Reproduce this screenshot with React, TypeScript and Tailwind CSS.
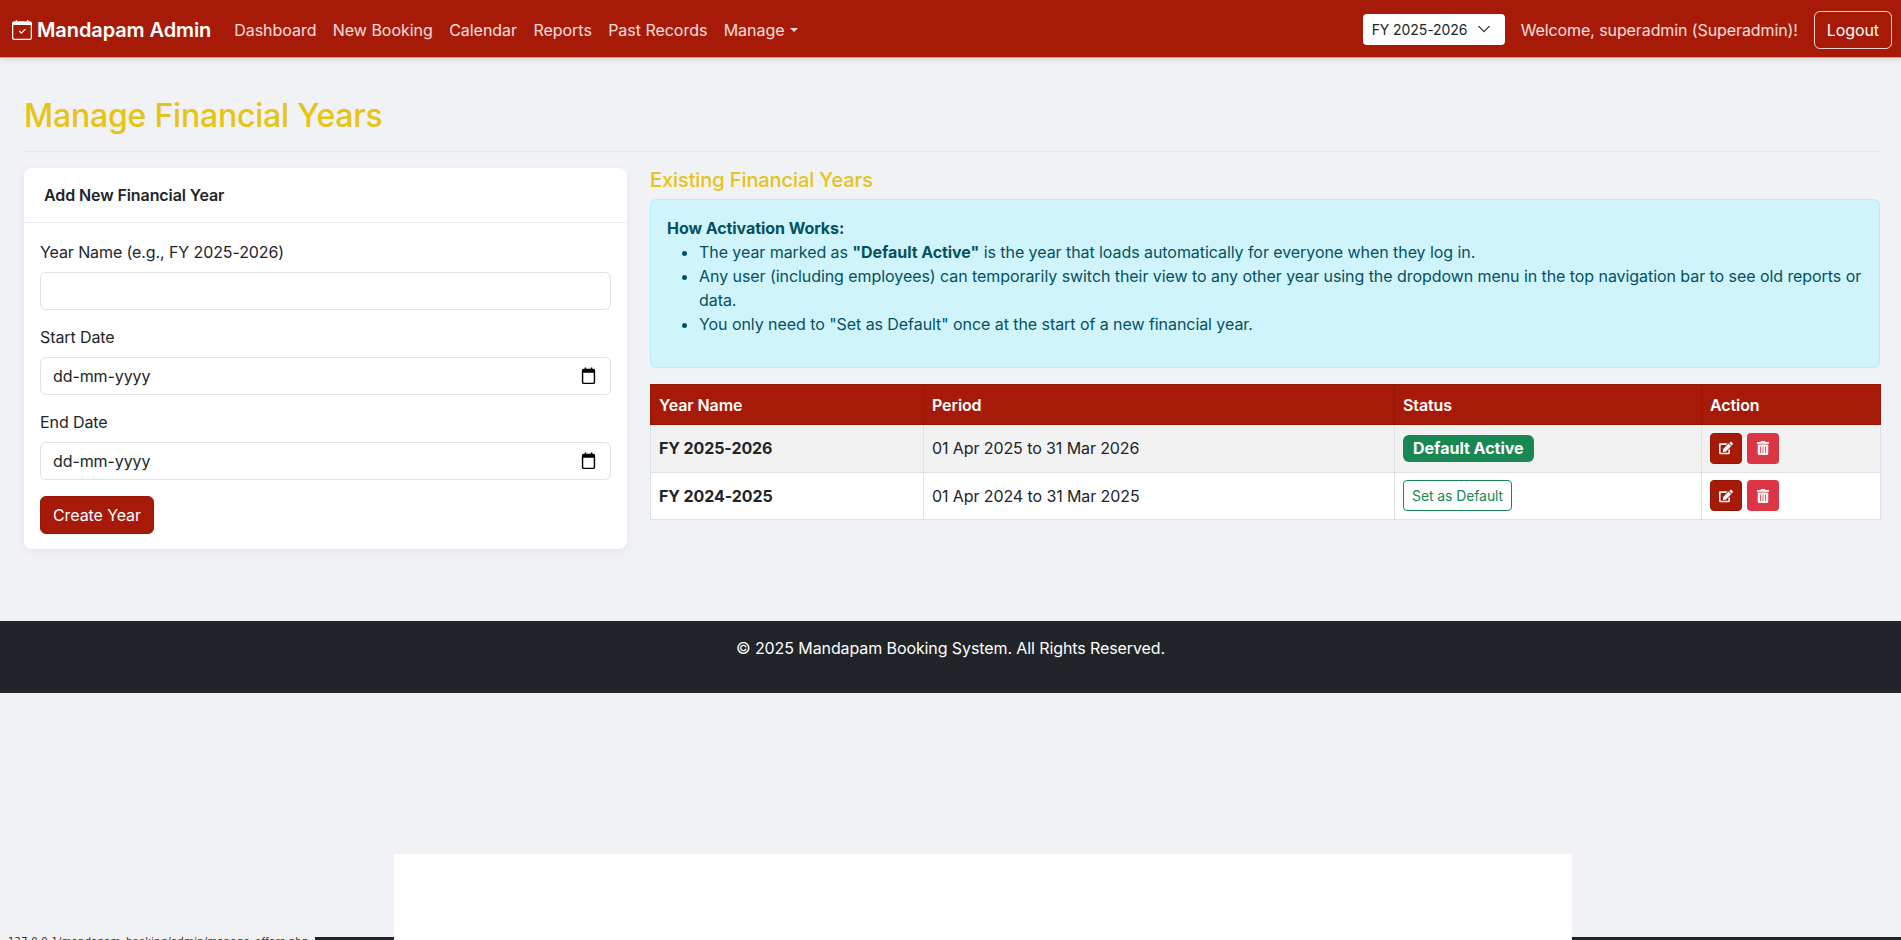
import { BsCalendarCheck } from "react-icons/bs";
import { FaEdit, FaTrashAlt } from "react-icons/fa";

const navLinks = ["Dashboard", "New Booking", "Calendar", "Reports", "Past Records"];

const years = [
  { name: "FY 2025-2026", period: "01 Apr 2025 to 31 Mar 2026", active: true },
  { name: "FY 2024-2025", period: "01 Apr 2024 to 31 Mar 2025", active: false },
];

const DateField = ({ label }: { label: string }) => (
  <div className="mb-[15px]">
    <label className="block mb-2 leading-6">{label}</label>
    <div className="relative">
      <input
        type="text"
        placeholder="dd-mm-yyyy"
        className="w-full h-[38px] px-3 bg-white border border-[#dee2e6] rounded-md text-[#212529] placeholder:text-[#212529] outline-none"
      />
      <svg viewBox="0 0 20 20" className="absolute right-[13px] top-[9px] w-[19px] h-[19px] fill-black">
        <path d="M15 3h-1V1.5h-1.5V3h-5V1.5H6V3H5a2 2 0 0 0-2 2v12a2 2 0 0 0 2 2h10a2 2 0 0 0 2-2V5a2 2 0 0 0-2-2zm.5 14a.5.5 0 0 1-.5.5H5a.5.5 0 0 1-.5-.5V7h11v10z" />
      </svg>
    </div>
  </div>
);

export default function App() {
  return (
    <div className="min-h-screen bg-[#f0f2f5] font-['Inter',sans-serif] text-base tracking-[-0.006em] text-[#212529]">
      <nav className="h-[58px] pt-0.5 bg-[#a81a08] border-b border-[#f08a7c] shadow-[0_2px_6px_rgba(0,0,0,0.1)] flex items-center pl-3 pr-[9px]">
        <a className="flex items-center gap-[5px] text-white text-xl font-semibold mr-[23px]">
          <BsCalendarCheck className="w-5 h-5" />
          Mandapam Admin
        </a>
        <ul className="flex items-center gap-[16.4px] tracking-[-0.002em] text-white/85">
          {navLinks.map((link) => (
            <li key={link}>{link}</li>
          ))}
          <li className="flex items-center gap-[5px]">
            Manage
            <span className="w-0 h-0 border-x-[4.8px] border-x-transparent border-t-[4.8px] border-t-white/85" />
          </li>
        </ul>
        <div className="ml-auto flex items-center">
          <div className="relative w-[142px] mr-4">
            <select className="w-full h-[31px] pl-[9px] appearance-none bg-white rounded text-sm text-[#212529] outline-none">
              <option>FY 2025-2026</option>
            </select>
            <svg viewBox="0 0 16 16" className="absolute right-[14px] top-[8px] w-[14px] h-[14px] fill-none stroke-[#343a40] stroke-[1.6]">
              <path d="m2 5 6 6 6-6" strokeLinecap="round" strokeLinejoin="round" />
            </svg>
          </div>
          <span className="text-white/85 mr-4">Welcome, superadmin (Superadmin)!</span>
          <button className="h-[38px] px-3 rounded-md border border-white/80 text-white">Logout</button>
        </div>
      </nav>

      <main className="pl-6 pr-[21px] pt-[39px] pb-[72px]">
        <div className="pb-4 mb-4 border-b border-[#e3e5e9]">
          <h1 className="text-[32px] leading-[38px] font-medium tracking-[-0.0068em] text-[#e6c414]">Manage Financial Years</h1>
        </div>

        <div className="flex gap-[23px] items-start">
          <section className="w-[603px] shrink-0 bg-white rounded-lg shadow-[0_2px_8px_rgba(0,0,0,0.06)]">
            <header className="h-[55px] px-5 flex items-center border-b border-[#eceef0] font-semibold">
              Add New Financial Year
            </header>
            <form className="px-4 pt-[17px] pb-[15px]">
              <div className="mb-[15px]">
                <label className="block mb-2 leading-6">Year Name (e.g., FY 2025-2026)</label>
                <input
                  type="text"
                  className="w-full h-[38px] px-3 bg-white border border-[#dee2e6] rounded-md outline-none"
                />
              </div>
              <DateField label="Start Date" />
              <DateField label="End Date" />
              <button type="button" className="mt-px h-[38px] px-3 rounded-md bg-[#a81a08] border border-[#98170a] text-white">
                Create Year
              </button>
            </form>
          </section>

          <section className="flex-1 min-w-0">
            <h2 className="text-xl leading-6 font-medium text-[#e6c414] mb-[7px]">Existing Financial Years</h2>
            <div className="bg-[#cff4fc] border border-[#b6effb] rounded-md pl-4 pr-2 py-4 tracking-[-0.004em] text-[#055160] mb-4">
              <strong className="font-bold leading-6">How Activation Works:</strong>
              <ul className="list-disc pl-8 mb-[15px] leading-6">
                <li>
                  The year marked as <strong className="font-bold">"Default Active"</strong> is the year that loads
                  automatically for everyone when they log in.
                </li>
                <li>
                  Any user (including employees) can temporarily switch their view to any other year using the dropdown
                  menu in the top navigation bar to see old reports or data.
                </li>
                <li>You only need to "Set as Default" once at the start of a new financial year.</li>
              </ul>
            </div>

            <table className="w-full table-fixed border-collapse">
              <colgroup>
                <col className="w-[273px]" />
                <col className="w-[471px]" />
                <col className="w-[307px]" />
                <col className="w-[179px]" />
              </colgroup>
              <thead>
                <tr className="bg-[#a81a08] text-white text-left">
                  <th className="h-[40px] px-2 font-semibold border border-[#931606]">Year Name</th>
                  <th className="px-2 font-semibold border border-[#931606]">Period</th>
                  <th className="px-2 font-semibold border border-[#931606]">Status</th>
                  <th className="px-2 font-semibold border border-[#931606]">Action</th>
                </tr>
              </thead>
              <tbody>
                {years.map((y) => (
                  <tr key={y.name} className={y.active ? "bg-[#f2f2f2]" : "bg-white"}>
                    <td className="h-[47.5px] px-2 font-bold border border-[#dee2e6]">{y.name}</td>
                    <td className="px-2 border border-[#dee2e6]">{y.period}</td>
                    <td className="px-2 border border-[#dee2e6]">
                      {y.active ? (
                        <span className="inline-block px-[10px] py-[5.5px] rounded-md bg-[#198754] text-white font-bold leading-4 tracking-normal">
                          Default Active
                        </span>
                      ) : (
                        <button className="h-[31px] px-2 rounded border border-[#198754] text-[#198754] text-sm">
                          Set as Default
                        </button>
                      )}
                    </td>
                    <td className="px-2 border border-[#dee2e6]">
                      <div className="flex gap-[5px]">
                        <button className="w-[32px] h-[31px] rounded flex items-center justify-center bg-[#a81a08] border border-[#8f1506] text-white">
                          <FaEdit className="w-[14px] h-[14px]" />
                        </button>
                        <button className="w-[32px] h-[31px] rounded flex items-center justify-center bg-[#dc3545] text-white">
                          <FaTrashAlt className="w-[14px] h-[14px]" />
                        </button>
                      </div>
                    </td>
                  </tr>
                ))}
              </tbody>
            </table>
          </section>
        </div>
      </main>

      <footer className="h-[72px] pt-[15px] bg-[#212529] text-white text-center leading-6">
        © 2025 Mandapam Booking System. All Rights Reserved.
      </footer>

      {/* overlays caught in the screenshot: status tooltip, dark strip, white panel */}
      <div className="fixed bottom-0 left-0 right-0 h-[3px] bg-[#212529]" />
      <div className="fixed bottom-0 left-0 w-[315px] h-[3px] overflow-hidden bg-[#f1f1f1] pl-2 font-['DejaVu_Sans',sans-serif] text-[10px] leading-[10px] tracking-[0.26px] text-[#333] whitespace-nowrap">
        127.0.0.1/mandapam_booking/admin/manage_offers.php
      </div>
      <div className="fixed bottom-0 left-[394px] w-[1178px] h-[86px] bg-white" />
    </div>
  );
}
